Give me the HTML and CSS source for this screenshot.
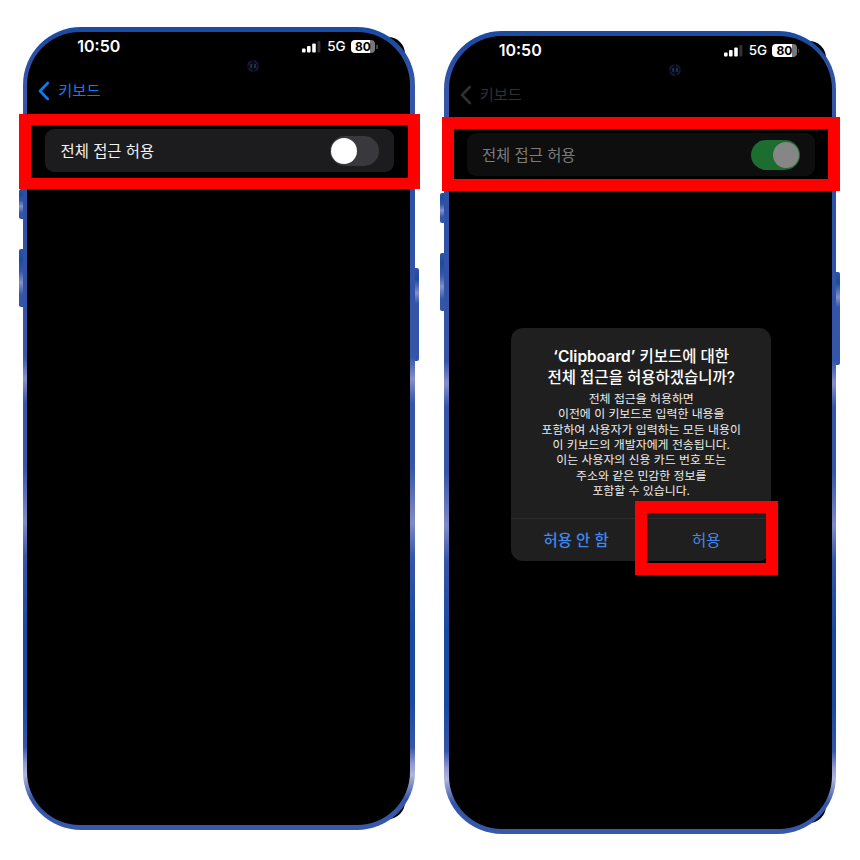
FILE: index.html
```html
<!DOCTYPE html>
<html lang="ko">
<head>
<meta charset="utf-8">
<title>키보드 전체 접근 허용</title>
<link rel="stylesheet" href="styles.css">
</head>
<body>
<main class="stage">
  <section class="phone">
    <div class="backing"></div>
    <i class="side side-volume-up"></i><i class="side side-volume-down"></i><i class="side side-power"></i>
    <div class="frame">
      <div class="screen">
        <header class="status">
          <span class="time">10:50</span>
          <svg class="signal" width="19" height="12" viewBox="0 0 19 12"><rect x="0" y="7.500" width="3.6" height="4" rx="1" fill="#fff"/><rect x="5" y="5" width="3.6" height="6.500" rx="1" fill="#fff"/><rect x="10.2" y="2.500" width="3.6" height="9" rx="1" fill="#fff"/><rect x="15.4" y="0" width="3" height="11.500" rx="1" fill="#333"/></svg>
          <span class="network">5G</span>
          <span class="battery">80</span><i class="cap"></i>
        </header>
        <svg class="camera" width="14" height="14" viewBox="0 0 14 14"><circle cx="7" cy="7" r="6.5" fill="#080817"/><circle cx="7" cy="7" r="5" fill="none" stroke="#1e1c3c" stroke-width="1.4" stroke-dasharray="5 3"/><path d="M5.2 5v4M9 5v4" stroke="#0e4856" stroke-width="1.5"/></svg>
        <nav class="back"><svg width="12" height="20" viewBox="0 0 12 20"><path d="M9.800 2 2 10l7.800 8" fill="none" stroke="currentColor" stroke-width="2.6" stroke-linecap="round" stroke-linejoin="round"/></svg><span>키보드</span></nav>
        <div class="setting"><span class="label">전체 접근 허용</span><i class="toggle"></i></div>
      </div>
    </div>
    <div class="mark mark-setting"></div>
  </section>

  <section class="phone phone-dimmed">
    <div class="backing"></div>
    <i class="side side-volume-up"></i><i class="side side-volume-down"></i><i class="side side-power"></i>
    <div class="frame">
      <div class="screen">
        <header class="status">
          <span class="time">10:50</span>
          <svg class="signal" width="19" height="12" viewBox="0 0 19 12"><rect x="0" y="7.500" width="3.6" height="4" rx="1" fill="#fff"/><rect x="5" y="5" width="3.6" height="6.500" rx="1" fill="#fff"/><rect x="10.2" y="2.500" width="3.6" height="9" rx="1" fill="#fff"/><rect x="15.4" y="0" width="3" height="11.500" rx="1" fill="#333"/></svg>
          <span class="network">5G</span>
          <span class="battery">80</span><i class="cap"></i>
        </header>
        <svg class="camera" width="14" height="14" viewBox="0 0 14 14"><circle cx="7" cy="7" r="6.5" fill="#080817"/><circle cx="7" cy="7" r="5" fill="none" stroke="#1e1c3c" stroke-width="1.4" stroke-dasharray="5 3"/><path d="M5.2 5v4M9 5v4" stroke="#0e4856" stroke-width="1.5"/></svg>
        <nav class="back"><svg width="12" height="20" viewBox="0 0 12 20"><path d="M9.800 2 2 10l7.800 8" fill="none" stroke="currentColor" stroke-width="2.6" stroke-linecap="round" stroke-linejoin="round"/></svg><span>키보드</span></nav>
        <div class="setting"><span class="label">전체 접근 허용</span><i class="toggle toggle-on"></i></div>
        <div class="dialog">
          <div class="message">
            <h1><b>‘Clipboard’</b> 키보드에 대한<br>전체 접근을 허용하겠습니까?</h1>
            <p>전체 접근을 허용하면<br>이전에 이 키보드로 입력한 내용을<br>포함하여 사용자가 입력하는 모든 내용이<br>이 키보드의 개발자에게 전송됩니다.<br>이는 사용자의 신용 카드 번호 또는<br>주소와 같은 민감한 정보를<br>포함할 수 있습니다.</p>
          </div>
          <div class="actions"><span class="deny">허용 안 함</span><span class="allow">허용</span></div>
        </div>
      </div>
    </div>
    <div class="mark mark-setting"></div>
    <div class="mark mark-allow"></div>
  </section>
</main>
</body>
</html>
```
FILE: styles.css
```css
* { box-sizing: border-box; }
body {
  margin: 0;
  background: #fff;
  font-family: Inter, "Noto Sans CJK KR", sans-serif;
}
.stage {
  display: flex;
  align-items: flex-start;
  gap: 28.9px;
  width: 860px;
  height: 860px;
  padding: 27px 0 0 22.5px;
  overflow: hidden;
}
.phone {
  position: relative;
  isolation: isolate;
  flex: none;
  width: 392.5px;
  height: 803px;
}
.phone-dimmed { margin-top: 4px; }
.frame {
  height: 100%;
  padding: 4.8px;
  border-radius: 58px;
  background: linear-gradient(#1c4ba2 0, #1c4ba2 12px, #3656a8 55px, #2a50a5 150px, #3555a8 320px, #3555a8 330px, #8590ca 352px, #3555a8 376px, #3555a8 440px, #7f8bc6 495px, #3555a8 530px, #1a4aa0 600px, #1a4aa0 675px, #3555a8 720px, #8e97cf 736px, #b0b5dd 748px, #3555a8 772px, #3858ab 803px);
}
.screen {
  height: 100%;
  border-radius: 53px;
  background: #000;
  color: #fff;
}
.backing {
  position: absolute;
  z-index: -1;
  inset: 10px 10px 11px 15px;
  border-radius: 17px;
  background: #000;
}
.side {
  position: absolute;
  z-index: -1;
  width: 8px;
  border-radius: 2px;
  background: linear-gradient(#3052a5, #1c4ba0 18%, #3555a8 38%, #8490ca 58%, #3555a8 80%);
}
.side-volume-up { left: -3.5px; top: 162px; height: 29.5px; }
.side-volume-down { left: -3.5px; top: 222px; height: 58px; }
.side-power {
  right: -4px;
  top: 241px;
  height: 93px;
  background: linear-gradient(#3052a5, #1c4ba0 12%, #8490ca 27%, #3555a8 38%);
}
.status {
  display: flex;
  align-items: center;
  height: 30px;
  padding: 0 32.5px 0 50px;
}
.time {
  flex: 1;
  margin-bottom: 2px;
  font-size: 16px;
  font-weight: 600;
}
.signal { margin-right: 6px; }
.network {
  margin-right: 5px;
  padding-bottom: 1px;
  font-size: 13.5px;
  font-weight: 500;
}
.battery {
  width: 24.5px;
  height: 13px;
  border-radius: 4px;
  background: linear-gradient(90deg, #fff 80%, #777 80%);
  color: #000;
  font-size: 12px;
  font-weight: 700;
  line-height: 13px;
  text-align: center;
}
.cap {
  width: 1.5px;
  height: 4px;
  margin-left: 1px;
  background: #444;
}
.camera { display: block; margin-left: 219px; margin-top: -3px; }
.back {
  display: flex;
  align-items: center;
  gap: 8px;
  height: 24px;
  margin: 6px 0 0 11px;
  color: #0a7cf5;
  font-size: 15.3px;
}
.back span { margin-bottom: 4px; }
.setting {
  display: flex;
  align-items: center;
  justify-content: space-between;
  width: 348.5px;
  height: 43.5px;
  margin: 26px 0 0 18.2px;
  padding: 0 15px;
  border-radius: 9px;
  background: #1c1c1e;
  color: #f2f2f2;
  font-size: 15.4px;
}
.label { margin-bottom: 2px; }
.toggle {
  display: flex;
  align-items: center;
  width: 49px;
  height: 30px;
  padding: 0 1.5px;
  border-radius: 15px;
  background: #39393d;
}
.toggle::before {
  content: "";
  width: 26px;
  height: 26px;
  border-radius: 50%;
  background: #fff;
}
.toggle-on {
  justify-content: flex-end;
  background: #1b6e30;
}
.toggle-on::before { background: #868686; }
.phone-dimmed .back { color: #303030; }
.phone-dimmed .setting { background: #0e0e0f; color: #7c7c7c; }
.dialog {
  display: flex;
  flex-direction: column;
  width: 260.5px;
  height: 233px;
  margin: 151.5px 0 0 62.3px;
  border-radius: 12px;
  background: #1f1f1f;
  text-align: center;
}
.message {
  height: 191.5px;
  padding-top: 18px;
  border-bottom: 1px solid #2c2c2e;
}
h1 {
  margin: 0;
  font-size: 15.5px;
  font-weight: 500;
  line-height: 21px;
  white-space: nowrap;
}
h1 b { font-weight: 600; }
p {
  margin: 3px 0 0;
  color: #ececec;
  font-size: 11.9px;
  line-height: 15.4px;
  white-space: nowrap;
}
.actions {
  display: grid;
  grid-template-columns: 1fr 1fr;
  align-items: center;
  flex: 1;
  padding-bottom: 2px;
  color: #3f88f0;
  font-size: 15.5px;
}
.deny { font-weight: 500; }
.mark {
  position: absolute;
  border: 12px solid #f00;
}
.mark-setting {
  left: -3.5px;
  top: 87px;
  width: 401px;
  height: 75px;
  border-width: 11px 12px;
}
.phone-dimmed .mark-setting {
  left: -1.9px;
  top: 86px;
  width: 398px;
  height: 74px;
  border-width: 12px;
}
.mark-allow {
  left: 191.1px;
  top: 470px;
  width: 143px;
  height: 74px;
}
```
